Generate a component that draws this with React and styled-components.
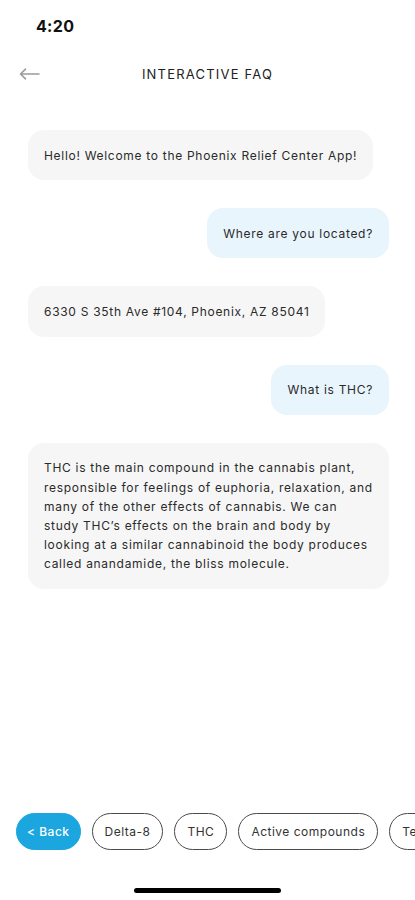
import React from "react";
import styled, { createGlobalStyle } from "styled-components";

const GlobalStyle = createGlobalStyle`
  html, body {
    margin: 0;
    padding: 0;
    background: #ffffff;
  }
  body {
    font-family: "Inter", "Noto Sans", sans-serif;
    -webkit-font-smoothing: antialiased;
  }
`;

const Screen = styled.div`
  width: 415px;
  height: 900px;
  display: flex;
  flex-direction: column;
  background: #ffffff;
  overflow: hidden;
`;

const StatusBar = styled.div`
  height: 52px;
  display: flex;
  align-items: center;
  padding-left: 36px;
  box-sizing: border-box;
`;

const Time = styled.span`
  font-family: "Inter", sans-serif;
  font-weight: 700;
  font-size: 16px;
  color: #111;
  letter-spacing: 0.3px;
`;

const Header = styled.div`
  height: 44px;
  display: grid;
  grid-template-columns: 60px 1fr 60px;
  align-items: center;
`;

const BackArrow = styled.button`
  border: 0;
  background: none;
  padding: 0 0 0 19px;
  display: flex;
  align-items: center;
  cursor: pointer;
`;

const Title = styled.h1`
  margin: 0;
  text-align: center;
  font-size: 13px;
  font-weight: 400;
  letter-spacing: 1.2px;
  color: #222;
`;

const ChatList = styled.div`
  display: flex;
  flex-direction: column;
  gap: 28px;
  padding: 34px 26px 0 28px;
`;

const Bubble = styled.div`
  align-self: ${(p) => (p.$mine ? "flex-end" : "flex-start")};
  background: ${(p) => (p.$mine ? "#e9f5fc" : "#f6f6f6")};
  border-radius: 16px;
  padding: 15.5px 16px;
  font-size: 12px;
  line-height: 19.2px;
  letter-spacing: 0.7px;
  color: #2a2a2a;
  white-space: nowrap;
`;

const Spacer = styled.div`
  flex: 1;
`;

const ChipRow = styled.div`
  display: flex;
  gap: 11px;
  padding-left: 16px;
  overflow: hidden;
`;

const Chip = styled.button`
  flex: none;
  height: 37px;
  padding: 0 ${(p) => (p.$primary ? "10px" : "12px")};
  border-radius: 19px;
  border: 1px solid ${(p) => (p.$primary ? "#1ba6df" : "#4a4a4a")};
  background: ${(p) => (p.$primary ? "#1ba6df" : "#ffffff")};
  color: ${(p) => (p.$primary ? "#ffffff" : "#333")};
  font-family: "Inter", sans-serif;
  font-size: 12px;
  letter-spacing: 0.5px;
  font-weight: ${(p) => (p.$primary ? 500 : 400)};
  white-space: nowrap;
  cursor: pointer;
`;

const HomeBar = styled.div`
  width: 147px;
  height: 5px;
  border-radius: 3px;
  background: #000;
  margin: 38px auto 7px;
`;

const messages = [
  { text: ["Hello! Welcome to the Phoenix Relief Center App!"] },
  { mine: true, text: ["Where are you located?"] },
  { text: ["6330 S 35th Ave #104, Phoenix, AZ 85041"] },
  { mine: true, text: ["What is THC?"] },
  {
    text: [
      "THC is the main compound in the cannabis plant,",
      "responsible for feelings of euphoria, relaxation, and",
      "many of the other effects of cannabis. We can",
      "study THC\u2019s effects on the brain and body by",
      "looking at a similar cannabinoid the body produces",
      "called anandamide, the bliss molecule.",
    ],
  },
];

const chips = ["Delta-8", "THC", "Active compounds", "Terpenes"];

export default function App() {
  return (
    <>
      <GlobalStyle />
      <Screen>
        <StatusBar>
          <Time>4:20</Time>
        </StatusBar>
        <Header>
          <BackArrow aria-label="Back">
            <svg width="21" height="12" viewBox="0 0 21 12" fill="none">
              <path
                d="M20 6H2M6.5 1.2L1.5 6l5 4.8"
                stroke="#9a9a9a"
                strokeWidth="1.6"
                strokeLinecap="round"
                strokeLinejoin="round"
              />
            </svg>
          </BackArrow>
          <Title>INTERACTIVE FAQ</Title>
          <span />
        </Header>
        <ChatList>
          {messages.map((m, i) => (
            <Bubble key={i} $mine={m.mine}>
              {m.text.map((line, j) => (
                <React.Fragment key={j}>
                  {j > 0 && <br />}
                  {line}
                </React.Fragment>
              ))}
            </Bubble>
          ))}
        </ChatList>
        <Spacer />
        <ChipRow>
          <Chip $primary>&lt; Back</Chip>
          {chips.map((c) => (
            <Chip key={c}>{c}</Chip>
          ))}
        </ChipRow>
        <HomeBar />
      </Screen>
    </>
  );
}
